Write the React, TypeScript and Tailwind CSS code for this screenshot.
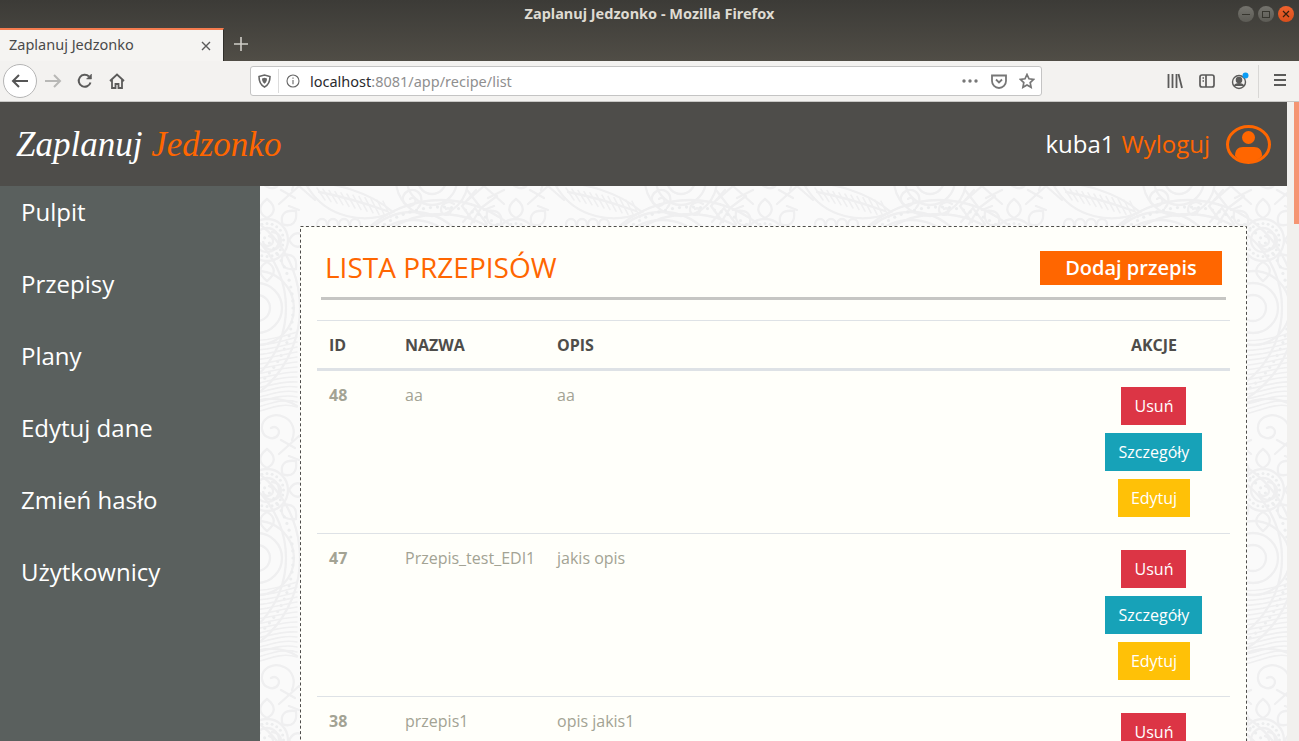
import React from "react";

const range = (n: number) => Array.from({ length: n }, (_, i) => i);
const polar = (cx: number, cy: number, r: number, i: number, n: number) => {
  const a = (i * 2 * Math.PI) / n;
  return [cx + r * Math.cos(a), cy + r * Math.sin(a)];
};

const Motif = () => (
  <g fill="none" stroke="#efeff0" strokeWidth="2.300" strokeLinecap="round">
    {/* ring mandala at origin */}
    <path d="M2 -4a5 5 0 1 1-6 5a9 9 0 1 0 9-9" />
    <circle cx="0" cy="0" r="12" />
    <circle cx="0" cy="0" r="21" />
    {range(20).map((i) => {
      const [x, y] = polar(0, 0, 16.500, i, 20);
      return <circle key={i} cx={x} cy={y} r="1.500" fill="#ecedee" stroke="none" />;
    })}
    {range(8).map((i) => (
      <path key={i} transform={`rotate(${i * 45})`} d="M0 -22c9-5 9-12 0-19c-9 7-9 14 0 19z" />
    ))}
    {/* spiral above the ring */}
    <path d="M4 -62c5-3 10 2 7 7c-4 6-15 3-16-6c-1-11 12-17 22-12c9 4 12 14 8 23" />
    <path d="M-30 -78c14-14 42-18 60-6M-28 -42l16 -8M28 -42l-14 -8M-32 -30l10 -4M32 -30l-10 -4" />
    <path d="M12 -36l20 -18l16 14M-12 -36l-20 -18l-16 14" />
    {/* arcs under the ring */}
    <circle cx="-10" cy="68" r="13" />
    <circle cx="-10" cy="68" r="25" />
    <circle cx="-10" cy="68" r="37" />
    {/* big dotted band and hatching */}
    <circle cx="-75" cy="68" r="94" />
    <circle cx="-75" cy="68" r="108" />
    {range(90).map((i) => {
      const [x, y] = polar(-75, 68, 101, i, 90);
      return <circle key={i} cx={x} cy={y} r="1.600" fill="#ecedee" stroke="none" />;
    })}
    {range(16).map((i) => (
      <path key={i} d={`M-30 ${100 + i * 5}C-10 ${102 + i * 5} 8 ${100 + i * 4} 30 ${92 + i * 5}`} strokeWidth="1.600" />
    ))}
    {/* hatched leaf in the upper band */}
    <path d="M40 -54C62 -62 105 -46 126 -28C100 -16 60 -20 40 -54z" />
    <path d="M52 -48C74 -44 100 -36 120 -29" />
    {range(12).map((i) => (
      <path key={i} d={`M${50 + i * 6} ${-52 + i * 1.200}l8 ${12 + i * 0.400}`} strokeWidth="1.600" />
    ))}
    {/* small spirals */}
    <path d="M143 -41c3-3 7 0 5 4c-3 5-11 3-12-3c-1-8 9-13 15-8c5 4 4 12 0 16" />
    <path d="M179 -31c3-2 6 1 4 4c-3 4-9 1-9-3c0-7 8-10 13-6" />
    {/* concentric half circles */}
    <circle cx="165" cy="-60" r="14" />
    <circle cx="165" cy="-60" r="25" />
    <circle cx="165" cy="-60" r="36" />
    {/* arcs rising from below the panel */}
    <circle cx="146" cy="32" r="43" />
    <circle cx="146" cy="32" r="52" />
    <circle cx="146" cy="32" r="60" />
    {/* scallops */}
    {range(4).map((i) => (
      <path key={i} d={`M${50 + i * 11} -10v-6a5 5 0 0 1 10 0v6`} />
    ))}
    {/* petal lattice beside the ring */}
    <path d="M200 -50l14 18l-10 16M214 -32l16 -12M-42 -18l-12 -16l14 -16" />
    <path d="M196 -18l12 -14l12 16" />
  </g>
);

const Lace = () => (
  <svg className="absolute inset-0 w-full h-full blur-[0.4px]" aria-hidden="true">
    <defs>
      <pattern id="lace" width="249" height="250" patternUnits="userSpaceOnUse" patternTransform="translate(7 304)">
        {[-249, 0, 249].map((x) =>
          [-250, 0, 250].map((y) => (
            <g key={`${x}-${y}`} transform={`translate(${x} ${y})`}>
              <Motif />
            </g>
          ))
        )}
      </pattern>
    </defs>
    <rect width="100%" height="100%" fill="#fafafa" />
    <rect width="100%" height="100%" fill="url(#lace)" />
  </svg>
);

const Btn = ({ w, bg, children }: { w: string; bg: string; children: string }) => (
  <div className={`h-[38px] ${w} ${bg} flex items-center justify-center pl-[2px]`}>{children}</div>
);

const Row = ({ id, name, desc }: { id: string; name: string; desc: string }) => (
  <div className="flex h-[163px] border-b border-[#dee2e6] text-[16px] text-[#a3a394]">
    <div className="w-[88px] pl-3 pt-[12px] font-bold">{id}</div>
    <div className="w-[152px] pt-[12px]">{name}</div>
    <div className="flex-1 pt-[12px]">{desc}</div>
    <div className="w-[152px] pr-[2px] flex flex-col items-center pt-[16px] gap-2 text-white">
      <Btn w="w-[65px]" bg="bg-[#dc3545]">Usuń</Btn>
      <Btn w="w-[97px]" bg="bg-[#17a2b8]">Szczegóły</Btn>
      <div className="h-[38px] w-[72px] ml-[1px] pl-[1px] bg-[#ffc107] flex items-center justify-center">Edytuj</div>
    </div>
  </div>
);

const Nav = ({ children }: { children: string }) => (
  <div className="h-[72px] pl-[21px] pt-[7px] text-[24px] leading-[38px] text-white">{children}</div>
);

export default function App() {
  return (
    <div className="h-[741px] w-[1299px] overflow-hidden flex flex-col font-['Open_Sans',sans-serif]">
      {/* window title */}
      <div className="h-[61px] shrink-0 bg-gradient-to-b from-[#3c3b37] to-[#504d46] relative">
        <div className="h-[27px] flex items-center justify-center text-[14.5px] font-bold text-[#dfdbd2] font-['Noto_Sans',sans-serif]">
          Zaplanuj Jedzonko - Mozilla Firefox
        </div>
        <div className="absolute right-[5px] top-[6px] flex gap-1">
          <div className="w-4 h-4 rounded-full bg-gradient-to-b from-[#74736d] to-[#5c5b55] flex items-center justify-center">
            <div className="w-2 h-px bg-[#37362f]" />
          </div>
          <div className="w-4 h-4 rounded-full bg-gradient-to-b from-[#74736d] to-[#5c5b55] flex items-center justify-center">
            <div className="w-2 h-[7px] border border-[#37362f]" />
          </div>
          <div className="w-4 h-4 rounded-full bg-gradient-to-b from-[#f0622d] to-[#d94f1c] flex items-center justify-center">
            <svg width="8" height="8" viewBox="0 0 8 8"><path d="M1 1l6 6M7 1l-6 6" stroke="#37200f" strokeWidth="1.200" /></svg>
          </div>
        </div>
        {/* tabs */}
        <div className="absolute left-0 bottom-0 flex h-[33px]">
          <div className="w-[224px] h-[33px] bg-[#f5f4f2] border-t-2 border-[#f57c4f] border-r border-r-[#2f2e2a] flex items-center pl-[9px] pr-[12px] justify-between text-[14.5px] text-[#4a4a4a] font-['Noto_Sans',sans-serif]">
            <span className="mb-[2px]">Zaplanuj Jedzonko</span>
            <svg width="10" height="10" viewBox="0 0 10 10"><path d="M1 1l8 8M9 1l-8 8" stroke="#5a5a5a" strokeWidth="1.400" /></svg>
          </div>
          <div className="w-[34px] flex items-center justify-center pb-[2px]">
            <svg width="14" height="14" viewBox="0 0 14 14"><path d="M7 0v14M0 7h14" stroke="#d0cec8" strokeWidth="1.600" /></svg>
          </div>
        </div>
      </div>
      {/* toolbar */}
      <div className="h-[41px] shrink-0 bg-[#f3f2f0] border-b border-[#c8c7c5] flex items-center relative">
        <div className="ml-[3px] w-[34px] h-[34px] rounded-full border border-[#b5b5b5] bg-white flex items-center justify-center">
          <svg width="18" height="16" viewBox="0 0 18 16" fill="none" stroke="#555" strokeWidth="2"><path d="M17 8H2M8 2L2 8l6 6" /></svg>
        </div>
        <svg className="ml-[7px]" width="18" height="16" viewBox="0 0 18 16" fill="none" stroke="#b8b8b6" strokeWidth="2"><path d="M1 8h15M10 2l6 6-6 6" /></svg>
        <svg className="ml-[15px]" width="16" height="16" viewBox="0 0 16 16" fill="none" stroke="#5b5b5a" strokeWidth="2"><path d="M13.500 9.500A6 6 0 1 1 12 3.500" /><path d="M14.500 1v5h-5z" fill="#5b5b5a" strokeWidth="0.500" /></svg>
        <svg className="ml-[16px]" width="16" height="16" viewBox="0 0 16 16" fill="none" stroke="#5b5b5a" strokeWidth="1.800"><path d="M1 8l7-6.500L15 8M3 6.500V15h3.500v-4h3v4H13V6.500" /></svg>
        <div className="absolute left-[250px] top-[5px] w-[792px] h-[30px] bg-white border border-[#c4c4c4] rounded-[3px] flex items-center text-[14.5px] font-['Noto_Sans',sans-serif]">
          <svg className="ml-[7px]" width="13" height="14" viewBox="0 0 13 14" fill="none" stroke="#666" strokeWidth="1.600"><path d="M1 2.500l5.500-1.500L12 2.500c0 5-1.500 8.500-5.500 10.500C2.500 11 1 7.500 1 2.500z" /><path d="M4 4.500l2.500-.7L9 4.500c0 2.500-.8 4-2.500 5.200C4.800 8.500 4 7 4 4.500z" fill="#666" stroke="none" /></svg>
          <div className="ml-[7px] w-px h-[24px] bg-[#dcdcdc]" />
          <svg className="ml-[7px]" width="14" height="14" viewBox="0 0 14 14" fill="none" stroke="#666" strokeWidth="1.100"><circle cx="7" cy="7" r="6" /><path d="M7 6v4.200M7 3.500v1.300" /></svg>
          <span className="ml-[10px] mt-[2px] text-[#2a2a2e]">localhost</span>
          <span className="mt-[2px] text-[#8f8f8f]">:8081/app/recipe/list</span>
          <div className="ml-auto mr-[6px] flex items-center">
            <svg width="16" height="4" viewBox="0 0 16 4" fill="#777"><circle cx="2" cy="2" r="1.700" /><circle cx="8" cy="2" r="1.700" /><circle cx="14" cy="2" r="1.700" /></svg>
            <svg className="ml-[13px]" width="16" height="15" viewBox="0 0 16 15" fill="none" stroke="#777" strokeWidth="1.800"><path d="M1 1.500h14v5.500a7 7 0 0 1-14 0zM5 5.500l3 3 3-3" /></svg>
            <svg className="ml-[12px]" width="16" height="16" viewBox="0 0 16 16" fill="none" stroke="#777" strokeWidth="1.700"><path d="M8 1.500l2 4.300 4.700.6-3.500 3.200.9 4.700L8 12l-4.100 2.300.9-4.700L1.300 6.400 6 5.800z" /></svg>
          </div>
        </div>
        <div className="absolute left-[1167px] top-[12px]">
          <svg width="16" height="16" viewBox="0 0 16 16" fill="none" stroke="#5b5b5a" strokeWidth="1.800"><path d="M1.500 1v14M5.500 1v14M9.500 1v14M11.500 1l3.500 14" /></svg>
        </div>
        <div className="absolute left-[1199px] top-[12px]">
          <svg width="16" height="16" viewBox="0 0 16 16" fill="none" stroke="#5b5b5a" strokeWidth="1.700"><rect x="1" y="2" width="14" height="12" rx="2" /><path d="M7 2v12M3.500 5H5M3.500 8H5" /></svg>
        </div>
        <div className="absolute left-[1231px] top-[11px]">
          <svg width="18" height="18" viewBox="0 0 18 18" fill="none" stroke="#5b5b5a" strokeWidth="1.400"><circle cx="8" cy="10" r="6.500" /><circle cx="8" cy="8" r="2.600" fill="#5b5b5a" /><path d="M3.500 14c1-3 8-3 9 0" fill="#5b5b5a" /><circle cx="14.500" cy="3.500" r="3" fill="#0a9cf5" stroke="none" /></svg>
        </div>
        <div className="absolute left-[1258px] top-[4px] w-px h-[33px] bg-[#d8d7d5]" />
        <div className="absolute left-[1274px] top-[13px] w-[12px] h-[12px] flex flex-col justify-between">
          <div className="h-[2px] bg-[#5b5b5a]" />
          <div className="h-[2px] bg-[#5b5b5a]" />
          <div className="h-[2px] bg-[#5b5b5a]" />
        </div>
      </div>
      {/* page */}
      <div className="flex-1 flex min-h-0">
        <div className="w-[1287px] flex flex-col min-h-0">
          <header className="h-[84px] shrink-0 bg-[#4e4d4a] flex items-center">
            <div className="ml-[16px] text-[35px] leading-none italic font-['Liberation_Serif',serif] text-white">
              Zaplanuj <span className="text-[#ff6600]">Jedzonko</span>
            </div>
            <div className="ml-auto text-[24px] text-white">kuba1</div>
            <div className="ml-[7px] text-[24px] text-[#ff6600]">Wyloguj</div>
            <svg className="ml-[16px] mr-[16px]" width="45" height="39" viewBox="0 0 45 39">
              <ellipse cx="22.500" cy="19.500" rx="21" ry="18" fill="none" stroke="#ff6600" strokeWidth="3" />
              <circle cx="22.500" cy="12.500" r="6.500" fill="#ff6600" />
              <path d="M9 31c0-6 3-9 8-9h11c5 0 8 3 8 9c-4 4-8 6-13.500 6S13 35 9 31z" fill="#ff6600" />
            </svg>
          </header>
          <div className="flex-1 flex min-h-0">
            <aside className="w-[260px] shrink-0 bg-[#5a605e]">
              <Nav>Pulpit</Nav>
              <Nav>Przepisy</Nav>
              <Nav>Plany</Nav>
              <Nav>Edytuj dane</Nav>
              <Nav>Zmień hasło</Nav>
              <Nav>Użytkownicy</Nav>
            </aside>
            <main className="flex-1 relative overflow-hidden pl-[40px] pr-[40px] pt-[40px]">
              <Lace />
              <div className="relative h-[600px] bg-[#fffffa] border border-transparent px-[16px]">
                <svg className="absolute left-[-1px] top-[-1px]" width="947" height="600" fill="none" aria-hidden="true">
                  <rect x="0.500" y="0.500" width="946" height="620" stroke="#4e4d4a" strokeDasharray="3 2.400" />
                </svg>
                <div className="flex items-center h-[70px] pl-[8px] pr-[8px] pt-[16px] pb-[4px]">
                  <h1 className="text-[28px] text-[#ff6600] mt-[-2px]">LISTA PRZEPISÓW</h1>
                  <div className="ml-auto w-[182px] h-[34px] bg-[#ff6600] text-white text-[20px] font-semibold flex items-center justify-center">Dodaj przepis</div>
                </div>
                <div className="h-[3px] bg-[#c6c6c3] mx-[4px] mr-[4px]" />
                <div className="mt-[20px] border-t border-[#dee2e6] flex h-[51px] items-center border-b-[3px] border-b-[#dee2e6] text-[16px] font-bold text-[#4e4d4a]">
                  <div className="w-[88px] pl-3">ID</div>
                  <div className="w-[152px]">NAZWA</div>
                  <div className="flex-1">OPIS</div>
                  <div className="w-[152px] text-center">AKCJE</div>
                </div>
                <Row id="48" name="aa" desc="aa" />
                <Row id="47" name="Przepis_test_EDI1" desc="jakis opis" />
                <Row id="38" name="przepis1" desc="opis jakis1" />
              </div>
            </main>
          </div>
        </div>
        <div className="w-[12px] bg-[#f1f0ee] flex justify-end">
          <div className="h-[122px] w-[5px] bg-[#f59573]" />
        </div>
      </div>
    </div>
  );
}
